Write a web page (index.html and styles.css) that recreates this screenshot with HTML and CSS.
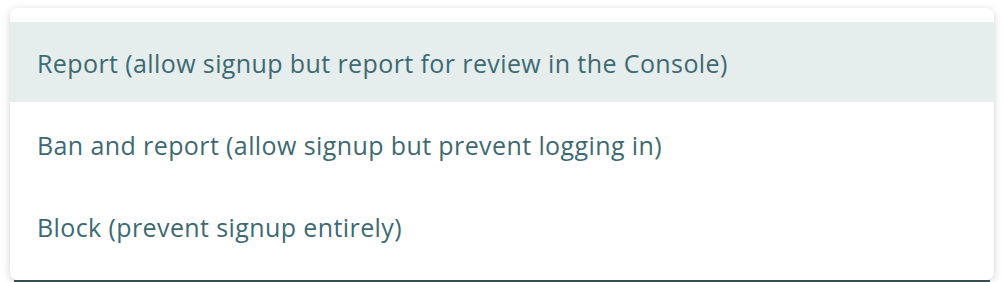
FILE: index.html
```html
<!DOCTYPE html>
<html>
<head>
<meta charset="utf-8">
<link rel="stylesheet" href="styles.css">
</head>
<body>
<div class="under"></div>
<ul class="menu">
  <li class="item active">Report (allow signup but report for review in the Console)</li>
  <li class="item">Ban and report (allow signup but prevent logging in)</li>
  <li class="item">Block (prevent signup entirely)</li>
</ul>
</body>
</html>
```
FILE: styles.css
```css
html, body {
  margin: 0;
  padding: 0;
  background: #ffffff;
  overflow: hidden;
}
body {
  width: 1004px;
  height: 282px;
  position: relative;
  font-family: "Open Sans", "Lato", sans-serif;
}
.under {
  position: absolute;
  left: 14px;
  right: 14px;
  bottom: 0;
  height: 2px;
  background: #3b575d;
}
.menu {
  position: relative;
  list-style: none;
  margin: 8px 10px 0 10px;
  padding: 14px 0;
  width: 984px;
  box-sizing: border-box;
  height: 272px;
  background: #ffffff;
  border-radius: 8px;
  box-shadow: 0 2px 8px rgba(0, 0, 0, 0.18);
  display: flex;
  flex-direction: column;
  gap: 2px;
}
.item {
  height: 80px;
  box-sizing: border-box;
  padding: 1px 27px 0 27px;
  display: flex;
  align-items: center;
  font-size: 25px;
  letter-spacing: 0.4px;
  color: #3d6a72;
}
.item.active {
  background: #e6eded;
}
```
